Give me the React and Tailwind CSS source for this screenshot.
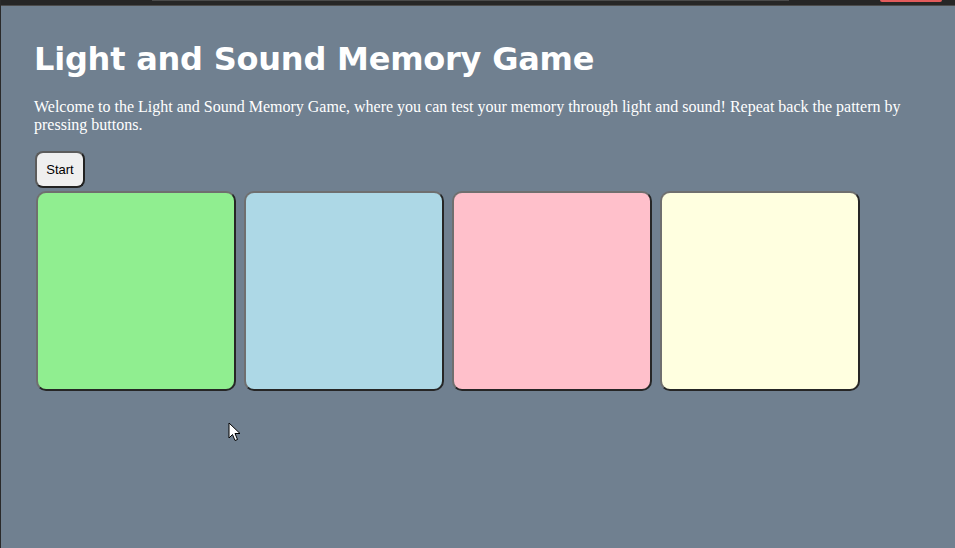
export default function App() {
  const colors = ["bg-[#90ee90]", "bg-[#add8e6]", "bg-[#ffc0cb]", "bg-[#ffffe0]"];
  return (
    <div className="relative h-[548px] w-[955px] overflow-hidden bg-[#708090] border-l border-[#2a2a2a]">
      <div className="relative h-[5px] bg-[#262626]">
        <div className="absolute left-[151px] top-0 h-[1px] w-[637px] bg-[#4a4a4a]" />
        <div className="absolute left-[879px] top-0 h-[2px] w-[62px] rounded-b bg-[#e35b5b]" />
      </div>
      <div className="h-[1px] bg-[#4b4b4b]" />
      <div className="pl-[33px] pt-[34px]">
        <h1 className="m-0 text-[32px] font-bold leading-[38px] tracking-[-0.22px] text-white" style={{ fontFamily: '"DejaVu Sans", Verdana, sans-serif' }}>
          Light and Sound Memory Game
        </h1>
        <p className="mt-[20px] w-[880px] text-[16px] leading-[18px] text-white" style={{ fontFamily: '"Liberation Serif", "Times New Roman", serif' }}>
          Welcome to the Light and Sound Memory Game, where you can test your memory through light and sound! Repeat back the pattern by pressing buttons.
        </p>
        <button className="mt-[17px] ml-[1px] block h-[37px] w-[50px] rounded-[8px] border-2 border-t-[#5c5c5c] border-l-[#5c5c5c] border-r-[#222] border-b-[#222] bg-[#efefef] text-[13px] text-black" style={{ fontFamily: '"Liberation Sans", Arial, sans-serif' }}>
          Start
        </button>
        <div className="mt-[3px] flex gap-[8px] pl-[2px]">
          {colors.map((c, i) => (
            <div key={i} className={`h-[200px] w-[200px] rounded-[10px] border-2 border-t-[#6f6f6f] border-l-[#6f6f6f] border-r-[#262626] border-b-[#262626] ${c}`} />
          ))}
        </div>
      </div>
      <svg className="absolute left-[227px] top-[422px]" width="13" height="20" viewBox="0 0 13 20">
        <path d="M1 1 L1 16 L4.5 12.5 L7 18.5 L9.5 17.5 L7 11.5 L12 11.5 Z" fill="white" stroke="black" strokeWidth="1" strokeLinejoin="miter" />
      </svg>
    </div>
  );
}
